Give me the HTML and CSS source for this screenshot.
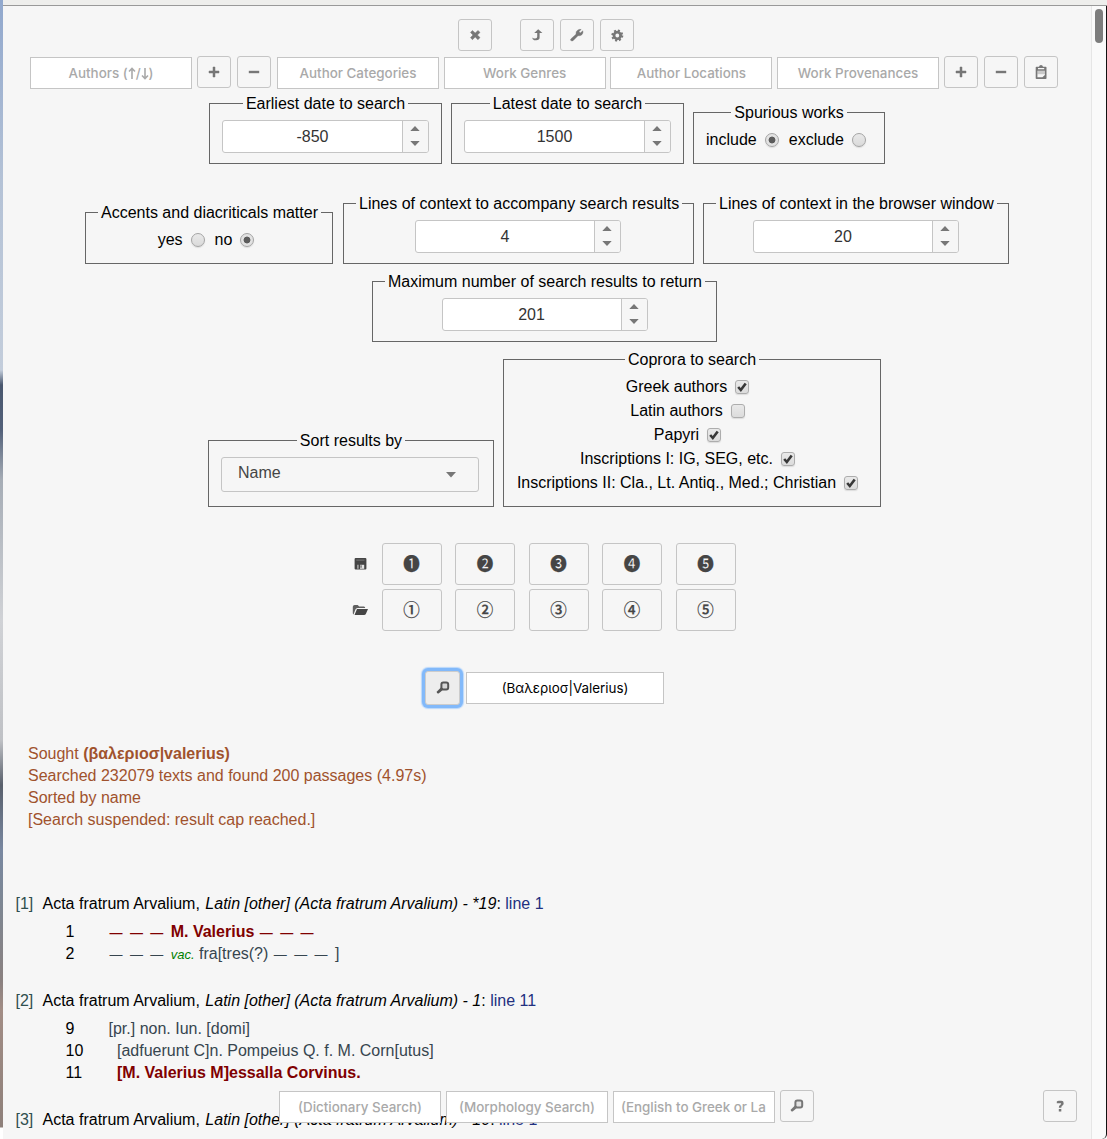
FILE: index.html
```html
<!DOCTYPE html>
<html lang="en">
<head>
<meta charset="utf-8">
<title>Text search</title>
<link rel="stylesheet" href="styles.css">
</head>
<body>
<svg width="0" height="0" class="defs">
  <symbol id="i-close" viewBox="0 0 16 16"><path d="M3.5 5.4 5.4 3.5 8.2 6 11 3.5 13 5.4 10.4 8 13 10.6 11 12.7 8.2 10 5.4 12.7 3.5 10.6 6 8z" stroke="currentColor" stroke-width=".5"/></symbol>
  <symbol id="i-up" viewBox="0 0 16 16"><path d="M9.2 2.3 13.4 6.1H10.6V10.6Q10.6 13.2 7.2 13.2H5.2Q3.4 13 3.2 10.6 4.2 11.6 6.2 11.5 8.2 11.5 8.2 9.8V6.1H5.2z"/></symbol>
  <symbol id="i-wrench" viewBox="0 0 16 16"><path d="M1.8 12 7 7.2Q6.6 4.4 8.6 3.2 10.4 2 12.2 2.5L10 4.6 11.2 6 13.9 3.8Q14.4 6.2 12.9 7.7 11.2 9.3 9 8.7L4 13.7Q2.8 14.3 1.8 13.5 1.3 12.8 1.8 12z" stroke="currentColor" stroke-width=".4"/></symbol>
  <symbol id="i-gear" viewBox="0 0 16 16"><g fill="none" stroke="currentColor"><circle cx="8.3" cy="8.5" r="3.3" stroke-width="2.8"/><circle cx="8.3" cy="8.5" r="5" stroke-width="2" stroke-dasharray="2 1.927"/></g></symbol>
  <symbol id="i-plus" viewBox="0 0 16 16"><path d="M7 3h2v4h4v2H9v4H7V9H3V7h4z" stroke="currentColor" stroke-width=".5"/></symbol>
  <symbol id="i-minus" viewBox="0 0 16 16"><path d="M2.8 6.8h10.4v2.4H2.8z"/></symbol>
  <symbol id="i-clip" viewBox="0 0 16 16"><path fill-rule="evenodd" d="M3.5 2.8H6Q6.3 1 8 1T10 2.8h2.7q.8 0 .8.8v10.6q0 .8-.8.8H3.5q-.8 0-.8-.8V3.6q0-.8.8-.8zM5 3.9v1.4h6.2V3.9zM4.4 6.8v6.5h5l2.5-2.3V6.8z"/><path d="M4.4 6.8h7.5v3.4H4.4z" opacity=".35"/></symbol>
  <symbol id="i-search" viewBox="0 0 16 16"><rect x="6.4" y="2.6" width="6.8" height="6.8" rx="1.9" fill="currentColor" fill-opacity=".15" stroke="currentColor" stroke-width="2"/><path d="M6.2 7.3 8.5 9.6 4.2 12.9Q3 13.8 2 13.1 1.4 12.3 2.2 11.3z"/></symbol>
  <symbol id="i-disk" viewBox="0 0 16 16"><path d="M3.6 2h9.8q1 0 1 1v9.6q0 1-1 1H3.6q-1 0-1-1V3q0-1 1-1z"/><path d="M4.3 3.6h8.2v1H4.3z" fill="#777"/><path d="M5 8.8h1.8v4H5z" fill="#999"/><path d="M8 8.8h4.2v4H8z" fill="#e4e4e4"/><path d="M8.3 9.3h1.5v2.4H8.3z" fill="#777"/></symbol>
  <symbol id="i-folder" viewBox="0 0 16 16"><path d="M.8 4.8Q1 3 2.5 3h3.2l1.5 1.5h4.7q1.3 0 1.3 1.5H5.5Q4 6 3.4 7.5L1.5 12.5Q.8 12 .8 11z" opacity=".85"/><path d="M5 7h11l-2.2 5Q13.3 13 12 13H2.5z"/></symbol>
  <symbol id="i-help" viewBox="0 0 16 16"><path d="M4.8 5.2V3.6Q5.4 2.8 7 2.8H9.3Q11.7 2.8 11.7 5.2 11.7 6.8 10.2 7.7 9.3 8.3 9.3 9.7H6.8Q6.7 7.6 8.3 6.7 9.3 6.2 9.1 5.2zM6.8 11h2.5v2.5H6.8z"/></symbol>
  <symbol id="i-spin" viewBox="0 0 12 26"><path d="M1.3 8 6 3 10.7 8zM1.3 18 6 23 10.7 18z"/></symbol>
  <symbol id="i-check" viewBox="0 0 14 14"><path d="M3.2 7 5.8 10 10.7 3.4" fill="none" stroke="#383838" stroke-width="2.6"/></symbol>
</svg>

<div class="window">
  <div class="desktop"></div>
  <div class="titlebar"></div>
  <main class="page">
    <div class="row tools">
      <button class="btn close"><svg><use href="#i-close"/></svg></button>
      <button class="btn"><svg><use href="#i-up"/></svg></button>
      <button class="btn"><svg><use href="#i-wrench"/></svg></button>
      <button class="btn"><svg><use href="#i-gear"/></svg></button>
    </div>

    <div class="row filters">
      <div class="field authors">Authors (<svg class="arrow" viewBox="0 0 8 13"><path d="M4 12V1.5M1 4.5l3-3 3 3"/></svg>/<svg class="arrow" viewBox="0 0 8 13"><path d="M4 1v10.5M1 8.5l3 3 3-3"/></svg>)</div>
      <div class="pair">
        <button class="btn"><svg><use href="#i-plus"/></svg></button>
        <button class="btn"><svg><use href="#i-minus"/></svg></button>
      </div>
      <div class="fields">
        <div class="field">Author Categories</div>
        <div class="field">Work Genres</div>
        <div class="field">Author Locations</div>
        <div class="field">Work Provenances</div>
      </div>
      <div class="pair last">
        <button class="btn"><svg><use href="#i-plus"/></svg></button>
        <button class="btn"><svg><use href="#i-minus"/></svg></button>
        <button class="btn"><svg><use href="#i-clip"/></svg></button>
      </div>
    </div>

    <div class="row sets dates">
      <fieldset class="date"><legend>Earliest date to search</legend>
        <div class="spinner"><span>-850</span><i><svg><use href="#i-spin"/></svg></i></div></fieldset>
      <fieldset class="date"><legend>Latest date to search</legend>
        <div class="spinner"><span>1500</span><i><svg><use href="#i-spin"/></svg></i></div></fieldset>
      <fieldset class="spurious"><legend>Spurious works</legend>
        <div class="radios"><span>include</span><b class="radio on"></b><span>exclude</span><b class="radio"></b></div></fieldset>
    </div>

    <div class="row sets context">
      <fieldset class="accents"><legend>Accents and diacriticals matter</legend>
        <div class="radios"><span>yes</span><b class="radio"></b><span>no</span><b class="radio on"></b></div></fieldset>
      <fieldset class="ctx-search"><legend>Lines of context to accompany search results</legend>
        <div class="spinner"><span>4</span><i><svg><use href="#i-spin"/></svg></i></div></fieldset>
      <fieldset class="ctx-browser"><legend>Lines of context in the browser window</legend>
        <div class="spinner"><span>20</span><i><svg><use href="#i-spin"/></svg></i></div></fieldset>
    </div>

    <div class="row sets maximum">
      <fieldset class="max"><legend>Maximum number of search results to return</legend>
        <div class="spinner"><span>201</span><i><svg><use href="#i-spin"/></svg></i></div></fieldset>
    </div>

    <div class="row sets corpora-row">
      <fieldset class="sort"><legend>Sort results by</legend>
        <div class="select"><span>Name</span><svg viewBox="0 0 10 6"><path d="M0 0h10L5 5.6z"/></svg></div></fieldset>
      <fieldset class="corpora"><legend>Coprora to search</legend>
        <div class="check">Greek authors<b class="box"><svg><use href="#i-check"/></svg></b></div>
        <div class="check">Latin authors<b class="box"></b></div>
        <div class="check">Papyri<b class="box"><svg><use href="#i-check"/></svg></b></div>
        <div class="check">Inscriptions I: IG, SEG, etc.<b class="box"><svg><use href="#i-check"/></svg></b></div>
        <div class="check">Inscriptions II: Cla., Lt. Antiq., Med.; Christian<b class="box"><svg><use href="#i-check"/></svg></b></div>
      </fieldset>
    </div>

    <div class="slots">
      <svg><use href="#i-disk"/></svg><button>❶</button><button>❷</button><button>❸</button><button>❹</button><button>❺</button>
      <svg><use href="#i-folder"/></svg><button>①</button><button>②</button><button>③</button><button>④</button><button>⑤</button>
    </div>

    <div class="row query">
      <button class="btn focused"><svg><use href="#i-search"/></svg></button>
      <div class="field value">(Βαλεριοσ|Valerius)</div>
    </div>

    <div class="summary">
      <div>Sought <b>(βαλεριοσ|valerius)</b></div>
      <div>Searched 232079 texts and found 200 passages (4.97s)</div>
      <div>Sorted by name</div>
      <div>[Search suspended: result cap reached.]</div>
    </div>

    <div class="results">
      <div class="head"><span class="num">[1]</span>Acta fratrum Arvalium, <em>Latin [other] (Acta fratrum Arvalium) - *19</em>: <a>line 1</a></div>
      <div class="line hit"><span class="no">1</span><span><span class="gap">———</span>M. Valerius <span class="gap">———</span></span></div>
      <div class="line"><span class="no">2</span><span><span class="gap">———</span><em class="note">vac.</em> fra[tres(?) <span class="gap">———</span>]</span></div>
      <div class="head"><span class="num">[2]</span>Acta fratrum Arvalium, <em>Latin [other] (Acta fratrum Arvalium) - 1</em>: <a>line 11</a></div>
      <div class="line"><span class="no">9</span><span>[pr.] non. Iun. [domi]</span></div>
      <div class="line indent"><span class="no">10</span><span>[adfuerunt C]n. Pompeius Q. f. M. Corn[utus]</span></div>
      <div class="line indent hit"><span class="no">11</span><span>[M. Valerius M]essalla Corvinus.</span></div>
      <div class="head"><span class="num">[3]</span>Acta fratrum Arvalium, <em>Latin [other] (Acta fratrum Arvalium) - 10</em>: <a>line 1</a></div>
    </div>
  </main>
  <div class="scroll"><div class="thumb"></div></div>
</div>

<div class="lookup">
  <div class="field">(Dictionary Search)</div>
  <div class="field">(Morphology Search)</div>
  <div class="field start">(English to Greek or La</div>
  <button class="btn"><svg><use href="#i-search"/></svg></button>
</div>
<button class="btn help"><svg><use href="#i-help"/></svg></button>
</body>
</html>
```
FILE: styles.css
```css
* { box-sizing: border-box; }
body {
  margin: 0;
  width: 1107px;
  height: 1139px;
  overflow: hidden;
  position: relative;
  background: #f6f6f6;
  color: #000;
  font: 16px/22px "Liberation Sans", Arial, sans-serif;
}
.defs { position: absolute; }
svg { fill: currentColor; display: block; flex: none; }

.window {
  display: grid;
  grid-template: 6px 1133px / 3px 1088px 16px;
}
.desktop {
  grid-row: 1 / 3;
  background: linear-gradient(#91a8cd 0, #b4c2d6 180px, #c3cddb 370px, #49576e 385px, #53617a 430px, #a6adb6 480px, #d0d2d6 620px, #bfc1c5 740px, #59606c 785px, #7988a1 850px, #7d8794 900px, #8a8180 980px, #a28d85 1010px, #8e807a 1127px, #fff 1128px);
}
.titlebar {
  grid-column: 2 / 4;
  background: #eeeeec;
  border-bottom: 1px solid #999;
}
.page { background: #f6f6f6; overflow: hidden; }
.scroll {
  background: #fafafa;
  border-left: 1px solid #e6e6e6;
  border-right: 1px solid #111;
  border-bottom-right-radius: 5px;
  padding: 3px 0 0 3px;
}
.thumb { width: 8px; height: 34px; border-radius: 4px; background: #7d7d7d; }

.row { display: flex; }
.btn {
  width: 34px;
  height: 32px;
  padding: 0;
  display: flex;
  align-items: center;
  justify-content: center;
  border: 1px solid #c5c5c5;
  border-radius: 3px;
  background: #f6f6f6;
  color: #777;
}
.btn svg { width: 16px; height: 16px; }
.field {
  width: 162px;
  height: 32px;
  border: 1px solid #c5c5c5;
  background: #fff;
  color: #a9a9a9;
  font: 500 13.4px/30px Inter, sans-serif;
  text-align: center;
  white-space: nowrap;
}
.arrow {
  display: inline-block;
  width: 8px;
  height: 13px;
  vertical-align: -2px;
  fill: none;
  stroke: currentColor;
  stroke-width: 1.6;
}

.tools { padding-left: 455px; margin-top: 13px; gap: 6px; }
.close { margin-right: 22px; }
.filters { padding-left: 27px; margin-top: 5px; height: 33px; }
.filters .field { margin-top: 1px; }
.pair { display: flex; gap: 6px; margin-left: 5px; }
.fields { display: flex; gap: 4.7px; margin-left: 6px; }

.sets { align-items: flex-end; }
fieldset {
  min-width: 0;
  margin: 0;
  padding: 8px 12px 0;
  border: 1px solid #666;
  height: 70px;
}
legend {
  height: 18px;
  margin: 0 auto;
  padding: 0 3px;
  line-height: 20px;
  white-space: nowrap;
}
.dates { padding-left: 206px; margin-top: 5px; gap: 9px; height: 70px; }
.date { width: 233px; }
.spurious { width: 192px; height: 61px; }
.context { padding-left: 82px; margin-top: 30px; height: 70px; }
.accents { width: 248px; height: 61px; margin-right: 10px; }
.ctx-search { width: 351px; margin-right: 9px; }
.ctx-browser { width: 306px; }
.maximum { padding-left: 369px; margin-top: 8px; height: 70px; }
.max { width: 345px; }
.corpora-row { padding-left: 205px; margin-top: 8px; gap: 9px; height: 157px; }
.sort { width: 286px; height: 76px; }
.corpora { width: 378px; height: 157px; padding-top: 7px; }

.spinner {
  display: flex;
  width: 207px;
  height: 33px;
  margin: 0 auto;
  border: 1px solid #c5c5c5;
  border-radius: 3px;
  overflow: hidden;
  background: #fff;
  color: #333;
  line-height: 32px;
  text-align: center;
}
.spinner span { flex: 1; }
.spinner i { width: 26px; padding: 2px 0 0 6px; border-left: 1px solid #c5c5c5; background: #f6f6f6; color: #777; }
.spinner svg { width: 12px; height: 26px; }
.ctx-search .spinner { width: 206px; margin-left: 59px; }
.ctx-browser .spinner, .max .spinner { width: 206px; }

.radios { display: flex; justify-content: center; align-items: center; height: 22px; line-height: 24px; }
.radios .radio { margin: 0 10px 0 8px; }
.radios .radio:last-child { margin-right: 6px; }
.radio {
  width: 14px;
  height: 14px;
  border-radius: 50%;
  border: 1px solid #a4a4a4;
  background: linear-gradient(#e9e9e9, #dadada);
  box-shadow: 0 1px 1px #ddd;
}
.radio.on { background: radial-gradient(circle, #5c5c5c 0 3px, #e2e2e2 3.8px); }
.check { display: flex; align-items: center; justify-content: center; height: 24px; line-height: 24px; white-space: nowrap; }
.box {
  width: 14px;
  height: 14px;
  margin: 0 9px 0 8px;
  border: 1px solid #adadad;
  border-radius: 3px;
  background: linear-gradient(#e9e9e9, #dcdcdc);
  box-shadow: 0 1px 1px #ddd;
}
.box svg { width: 14px; height: 14px; margin: -1px; }
.select {
  width: 258px;
  height: 35px;
  padding: 0 22px 3px 16px;
  display: flex;
  align-items: center;
  justify-content: space-between;
  border: 1px solid #c5c5c5;
  border-radius: 3px;
  background: #f6f6f6;
  color: #454545;
}
.select svg { width: 10px; height: 6px; margin-top: 4px; color: #777; }

.slots {
  display: grid;
  grid-template-columns: 16px repeat(5, 60px);
  grid-auto-rows: 42px;
  gap: 4px 13.5px;
  align-items: center;
  margin: 36px 0 0 349px;
  color: #454545;
}
.slots svg { width: 16px; height: 16px; }
.slots button {
  width: 60px;
  height: 42px;
  padding: 0 0 2px;
  border: 1px solid #c5c5c5;
  border-radius: 3px;
  background: #f6f6f6;
  color: #454545;
  font: 500 16.5px/20px "Noto Sans CJK JP", sans-serif;
  -webkit-text-stroke: .25px #454545;
}

.query { padding-left: 422px; margin-top: 40px; gap: 6px; }
.btn.focused {
  width: 35px;
  height: 34px;
  background: #ededed;
  color: #555;
  border-color: #ccc;
  box-shadow: 0 0 0 3px #82b9fa, 0 0 1px 4px #b9d7fb;
}
.field.value { width: 198px; margin: 1px 0 0 0; color: #000; font-weight: 400; }

.summary { margin: 38px 0 0 25px; color: #a0522d; white-space: nowrap; }
.results { margin: 62px 0 0 12.5px; white-space: nowrap; }
.head { height: 22px; }
.head:not(:first-child) { margin-top: 25px; }
.head + .line { margin-top: 6px; }
.head em { margin-left: 1px; }
.num { display: inline-block; width: 27px; color: #2f4f4f; }
.head a { color: #22307f; }
.line { display: flex; height: 22px; color: #36454f; }
.no { width: 43px; margin-left: 50px; color: #000; font-weight: normal; }
.line.indent .no { width: 51.5px; }
.line.hit { color: #800000; font-weight: bold; }
.gap { font-size: 13px; letter-spacing: 7.4px; margin-left: 1px; }
.note { color: #008000; font-size: 13px; }

.lookup { position: absolute; left: 279px; top: 1090px; display: flex; gap: 5px; }
.lookup .field { margin-top: 1px; }
.lookup .start { text-align: left; padding-left: 7px; }
.help { position: absolute; left: 1043px; top: 1090px; }
```
